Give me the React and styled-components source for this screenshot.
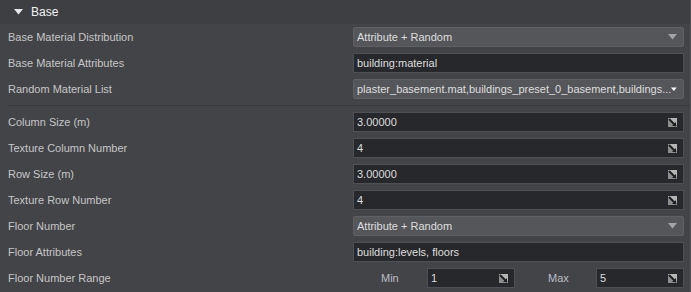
import styled, { createGlobalStyle } from "styled-components";

const Global = createGlobalStyle`
    html, body{
        margin: 0;
        padding: 0;
        background: #434448;
    }
    body{
        font-family: "Liberation Sans", Arial, sans-serif;
        font-size: 11px;
        color: #c9c9c9;
    }
`

const Panel = styled.div`
    width: 691px;
    height: 292px;
    background: #434448;
    border-right: 1px solid #505155;
    box-sizing: border-box;
    overflow: hidden;
`

const Header = styled.div`
    height: 24px;
    display: flex;
    align-items: center;
    padding-left: 14px;
    gap: 8px;
    background: #3e3f43;
    color: #f2f2f2;
    font-size: 12px;
`

const Row = styled.div`
    height: 26px;
    display: flex;
    align-items: center;
`

const Label = styled.div`
    width: 345px;
    padding-left: 8px;
    flex-shrink: 0;
    color: #c6c6c6;
`

const Separator = styled.div`
    height: 7px;
    display: flex;
    align-items: center;
    padding-left: 8px;

    &::after{
        content: "";
        flex: 1;
        height: 1px;
        background: #38393c;
    }
`

const Field = styled.div`
    flex: 1;
    min-width: 0;
    margin-right: 6px;
    height: 20px;
    box-sizing: border-box;
    display: flex;
    align-items: center;
    justify-content: space-between;
    padding: 0 6px 0 3px;
    color: #dedede;
    white-space: nowrap;
    overflow: hidden;
    border: 1px solid ${p => p.$select ? "#5e6064" : "#4f5054"};
    border-radius: ${p => p.$select ? "2px" : "0"};
    background: ${p => p.$select ? "#55565a" : "#27282b"};
`

const Range = styled.div`
    flex: 1;
    margin-right: 6px;
    display: flex;
    align-items: center;
`

const RangeLabel = styled.div`
    flex: 0 0 ${p => p.$w}px;
    padding-left: ${p => p.$pad}px;
    box-sizing: border-box;
    color: #b9bcc6;
`

const RangeField = styled(Field)`
    flex: 0 0 88px;
    margin-right: 0;
`

function Arrow({ color = "#a3a3a3", size = 9 }){
    return (
        <svg width={size} height={size * 0.6} viewBox="0 0 10 6">
            <polygon points="0,0 10,0 5,6" fill={color} />
        </svg>
    )
}

function Spin(){
    return (
        <svg width="9" height="9" viewBox="0 0 9 9">
            <rect x="0" y="0" width="9" height="9" fill="#8e8e8e" />
            <polygon points="0,0 9,0 9,9" fill="#b4b4b4" />
            <line x1="1" y1="1" x2="8" y2="8" stroke="#1e1e20" strokeWidth="2" />
            <polygon points="4,8 8,8 8,4" fill="#1e1e20" />
        </svg>
    )
}

function Select({ value, bright }){
    return (
        <Field $select>
            <span>{value}</span>
            <Arrow color={bright ? "#ffffff" : "#a3a3a3"} size={bright ? 11 : 9} />
        </Field>
    )
}

function Text({ value }){
    return <Field><span>{value}</span></Field>
}

function Number({ value }){
    return (
        <Field>
            <span>{value}</span>
            <Spin />
        </Field>
    )
}

export default function App(){
    return (
        <Panel>
            <Global />
            <Header>
                <Arrow color="#e8e8e8" size={9} />
                <span>Base</span>
            </Header>
            <Row>
                <Label>Base Material Distribution</Label>
                <Select value="Attribute + Random" />
            </Row>
            <Row>
                <Label>Base Material Attributes</Label>
                <Text value="building:material" />
            </Row>
            <Row>
                <Label>Random Material List</Label>
                <Select bright value="plaster_basement.mat,buildings_preset_0_basement,buildings..." />
            </Row>
            <Separator />
            <Row>
                <Label>Column Size (m)</Label>
                <Number value="3.00000" />
            </Row>
            <Row>
                <Label>Texture Column Number</Label>
                <Number value="4" />
            </Row>
            <Row>
                <Label>Row Size (m)</Label>
                <Number value="3.00000" />
            </Row>
            <Row>
                <Label>Texture Row Number</Label>
                <Number value="4" />
            </Row>
            <Row>
                <Label>Floor Number</Label>
                <Select value="Attribute + Random" />
            </Row>
            <Row>
                <Label>Floor Attributes</Label>
                <Text value="building:levels, floors" />
            </Row>
            <Row>
                <Label>Floor Number Range</Label>
                <Range>
                    <RangeLabel $w={74} $pad={28}>Min</RangeLabel>
                    <RangeField>
                        <span>1</span>
                        <Spin />
                    </RangeField>
                    <RangeLabel $w={81} $pad={33}>Max</RangeLabel>
                    <RangeField>
                        <span>5</span>
                        <Spin />
                    </RangeField>
                </Range>
            </Row>
        </Panel>
    )
}
